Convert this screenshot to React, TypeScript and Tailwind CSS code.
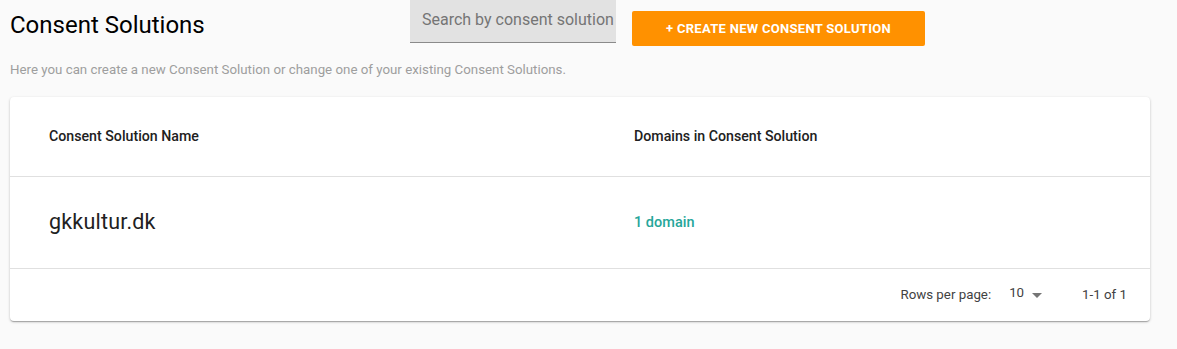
import { useState } from "react";

const rows = [{ id: 1, name: "gkkultur.dk", domains: 1 }];

const App = () => {
  const [search, setSearch] = useState("");

  return (
    <div
      className="w-full h-[349px] bg-[#fafafa] text-[#212121]"
      style={{ fontFamily: "Roboto, 'Liberation Sans', sans-serif" }}
    >
      <div className="flex flex-row items-start">
        <h1 className="w-[410px] pl-[10px] pt-[9px] text-[24px] leading-[32px] font-normal text-black">
          Consent Solutions
        </h1>
        <div className="w-[206px] h-[43px] bg-[#e2e2e2] border-b border-[#8a8a8a] flex items-center">
          <input
            type="text"
            value={search}
            onChange={(e) => setSearch(e.target.value)}
            placeholder="Search by consent solution name"
            className="w-full h-full pl-3 pb-1 bg-transparent outline-none text-[16px] placeholder:text-[#757575]"
          />
        </div>
        <button className="ml-4 mt-[11px] w-[293px] h-[35px] rounded-[2px] bg-[#ff9100] text-white text-[13px] font-bold tracking-[0.3px] uppercase">
          + Create new consent solution
        </button>
      </div>

      <p className="pl-[10px] mt-[16px] text-[13.3px] leading-[16px] text-[#9e9e9e]">
        Here you can create a new Consent Solution or change one of your existing Consent Solutions.
      </p>

      <div className="ml-[10px] mt-[19px] w-[1140px] bg-white rounded-[4px] shadow-[0_1px_3px_rgba(0,0,0,0.2),0_1px_1px_rgba(0,0,0,0.14),0_2px_1px_-1px_rgba(0,0,0,0.12)]">
        <div className="flex items-center h-[80px] border-b border-[#e0e0e0] pl-[39px] text-[14.2px] font-medium text-[#212121]">
          <div className="w-[585px]">Consent Solution Name</div>
          <div>Domains in Consent Solution</div>
        </div>
        {rows.map((row) => (
          <div
            key={row.id}
            className="flex items-center h-[92px] border-b border-[#e0e0e0] pl-[39px]"
          >
            <div className="w-[585px] text-[21.5px] font-normal text-[#212121] tracking-[0.2px]">{row.name}</div>
            <div className="text-[14.5px] font-medium text-[#26a69a]">
              {row.domains} domain{row.domains > 1 ? "s" : ""}
            </div>
          </div>
        ))}
        <div className="flex items-center justify-end h-[52px] pr-[23px] text-[13.3px] text-[#424242]">
          <span>Rows per page:</span>
          <div className="ml-[18px] flex items-center">
            <span className="text-[13.3px] -mt-1">10</span>
            <svg width="24" height="24" viewBox="0 0 24 24" className="ml-[1px] fill-[#757575]">
              <path d="M7 10l5 5 5-5z" />
            </svg>
          </div>
          <span className="ml-[33px]">1-1 of 1</span>
        </div>
      </div>
    </div>
  );
};

export default App;
